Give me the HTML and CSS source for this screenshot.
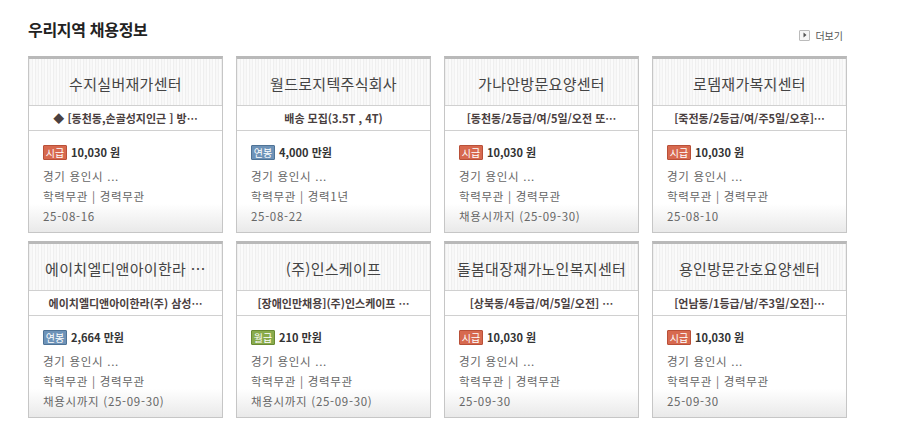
FILE: index.html
```html
<!DOCTYPE html>
<html lang="ko">
<head>
<meta charset="utf-8">
<link rel="stylesheet" href="styles.css">
</head>
<body>
<div class="wrap">
  <div class="head">
    <h2 class="title">우리지역 채용정보</h2>
    <a class="more"><span class="more-ico"><svg width="6" height="6" viewBox="0 0 6 6"><path d="M1.5 0.5 L4.5 3 L1.5 5.5 Z" fill="#555"/></svg></span>더보기</a>
  </div>
  <div class="grid">
    <div class="card">
      <div class="c-title">수지실버재가센터</div>
      <div class="c-sub">◆ [동천동,손골성지인근 ] 방…</div>
      <div class="c-body">
        <div class="pay"><span class="badge hour">시급</span>10,030 원</div>
        <div class="line">경기 용인시 ...</div>
        <div class="line">학력무관 | 경력무관</div>
        <div class="line">25-08-16</div>
      </div>
    </div>
    <div class="card">
      <div class="c-title">월드로지텍주식회사</div>
      <div class="c-sub">배송 모집(3.5T , 4T)</div>
      <div class="c-body">
        <div class="pay"><span class="badge year">연봉</span>4,000 만원</div>
        <div class="line">경기 용인시 ...</div>
        <div class="line">학력무관 | 경력1년</div>
        <div class="line">25-08-22</div>
      </div>
    </div>
    <div class="card">
      <div class="c-title">가나안방문요양센터</div>
      <div class="c-sub">[동천동/2등급/여/5일/오전 또…</div>
      <div class="c-body">
        <div class="pay"><span class="badge hour">시급</span>10,030 원</div>
        <div class="line">경기 용인시 ...</div>
        <div class="line">학력무관 | 경력무관</div>
        <div class="line">채용시까지 (25-09-30)</div>
      </div>
    </div>
    <div class="card">
      <div class="c-title">로뎀재가복지센터</div>
      <div class="c-sub">[죽전동/2등급/여/주5일/오후]…</div>
      <div class="c-body">
        <div class="pay"><span class="badge hour">시급</span>10,030 원</div>
        <div class="line">경기 용인시 ...</div>
        <div class="line">학력무관 | 경력무관</div>
        <div class="line">25-08-10</div>
      </div>
    </div>
    <div class="card">
      <div class="c-title">에이치엘디앤아이한라 …</div>
      <div class="c-sub">에이치엘디앤아이한라(주) 삼성…</div>
      <div class="c-body">
        <div class="pay"><span class="badge year">연봉</span>2,664 만원</div>
        <div class="line">경기 용인시 ...</div>
        <div class="line">학력무관 | 경력무관</div>
        <div class="line">채용시까지 (25-09-30)</div>
      </div>
    </div>
    <div class="card">
      <div class="c-title">(주)인스케이프</div>
      <div class="c-sub">[장애인만채용](주)인스케이프 …</div>
      <div class="c-body">
        <div class="pay"><span class="badge month">월급</span>210 만원</div>
        <div class="line">경기 용인시 ...</div>
        <div class="line">학력무관 | 경력무관</div>
        <div class="line">채용시까지 (25-09-30)</div>
      </div>
    </div>
    <div class="card">
      <div class="c-title">돌봄대장재가노인복지센터</div>
      <div class="c-sub">[상북동/4등급/여/5일/오전] …</div>
      <div class="c-body">
        <div class="pay"><span class="badge hour">시급</span>10,030 원</div>
        <div class="line">경기 용인시 ...</div>
        <div class="line">학력무관 | 경력무관</div>
        <div class="line">25-09-30</div>
      </div>
    </div>
    <div class="card">
      <div class="c-title">용인방문간호요양센터</div>
      <div class="c-sub">[언남동/1등급/남/주3일/오전]…</div>
      <div class="c-body">
        <div class="pay"><span class="badge hour">시급</span>10,030 원</div>
        <div class="line">경기 용인시 ...</div>
        <div class="line">학력무관 | 경력무관</div>
        <div class="line">25-09-30</div>
      </div>
    </div>
  </div>
</div>
</body>
</html>
```

FILE: styles.css
```css
* { box-sizing: border-box; }
html, body { margin: 0; padding: 0; background: #fff; }
body {
  font-family: "Noto Sans CJK KR", "Noto Sans", sans-serif;
  color: #333;
}
.wrap { padding: 17px 0 0 28px; width: 903px; }
.head {
  display: flex;
  align-items: center;
  justify-content: space-between;
  width: 815px;
  height: 24px;
}
.title {
  margin: 0;
  font-size: 16px;
  font-weight: 700;
  color: #222;
  letter-spacing: -0.3px;
  line-height: 24px;
}
.more {
  display: flex;
  align-items: center;
  gap: 5px;
  font-size: 10px;
  color: #555;
  margin-top: 12px;
}
.more-ico {
  width: 11px;
  height: 11px;
  border: 1px solid #bbb;
  border-radius: 1px;
  display: flex;
  align-items: center;
  justify-content: center;
  background: #f6f6f6;
}
.grid {
  display: grid;
  grid-template-columns: repeat(4, 195px);
  grid-auto-rows: 177px;
  column-gap: 13px;
  row-gap: 8px;
  margin-top: 15px;
}
.card {
  border: 1px solid #c6c6c6;
  border-top: 3px solid #b9b9b9;
  display: flex;
  flex-direction: column;
  overflow: hidden;
}
.c-title {
  height: 47px;
  flex: none;
  display: flex;
  align-items: center;
  justify-content: center;
  font-size: 15px;
  color: #444;
  letter-spacing: 0.3px;
  white-space: nowrap;
  background: repeating-linear-gradient(90deg, #efefef 0 1px, #f8f8f8 1px 3px, #f1f1f1 3px 4px, #fbfbfb 4px 6px);
  border-bottom: 1px solid #d0d0d0;
  padding-top: 3px;
}
.c-sub {
  height: 25px;
  flex: none;
  display: flex;
  align-items: center;
  justify-content: center;
  font-size: 11px;
  font-weight: 700;
  color: #4a4040;
  white-space: nowrap;
  overflow: hidden;
  border-bottom: 1px solid #d0d0d0;
  background: #fff;
}
.c-body {
  flex: 1;
  padding: 13px 0 0 14px;
  background: linear-gradient(180deg, #fff 0, #fff 72%, #e9e9e9 100%);
}
.pay {
  display: flex;
  align-items: center;
  font-size: 11px;
  font-weight: 700;
  color: #333;
  height: 16px;
  margin-bottom: 6px;
}
.badge {
  display: inline-flex;
  align-items: center;
  justify-content: center;
  width: 24px;
  height: 15px;
  font-size: 10px;
  font-weight: 400;
  color: #fff;
  margin-right: 4px;
  border-radius: 1px;
}
.badge.hour { background: #d7694f; border: 1px solid #b95038; }
.badge.year { background: #6e93b8; border: 1px solid #4f7396; }
.badge.month { background: #89ab4c; border: 1px solid #6a8a33; }
.line {
  font-size: 11.5px;
  color: #666;
  line-height: 20px;
  letter-spacing: 0.7px;
  white-space: nowrap;
}
```
